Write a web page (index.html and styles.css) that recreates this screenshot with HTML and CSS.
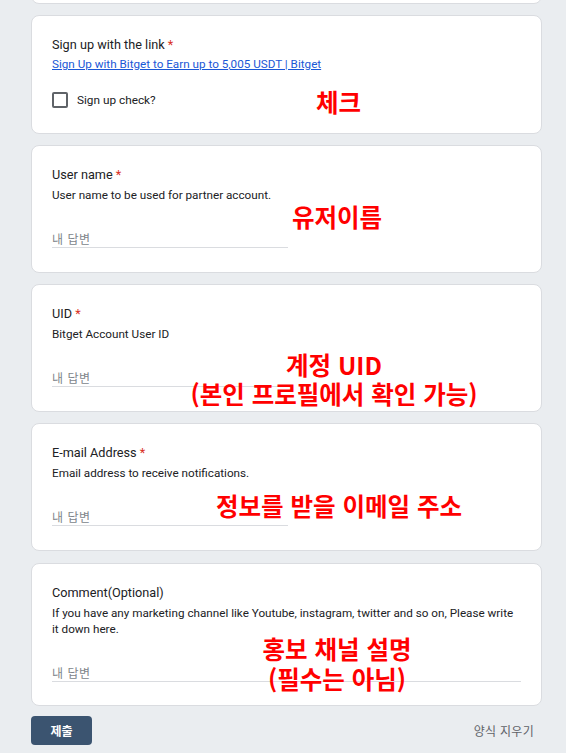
FILE: index.html
```html
<!DOCTYPE html>
<html lang="ko">
<head>
<meta charset="utf-8">
<title>Form</title>
<link rel="stylesheet" href="styles.css">
</head>
<body>
<div class="form">
  <div class="card card-prev"></div>

  <div class="card card-first">
    <div class="title">Sign up with the link <span class="req">*</span></div>
    <a class="link" href="#">Sign Up with Bitget to Earn up to 5,005 USDT | Bitget</a>
    <label class="check-row"><span class="box"></span><span class="check-label">Sign up check?</span></label>
    <div class="note note-check">체크</div>
  </div>

  <div class="card">
    <div class="title">User name <span class="req">*</span></div>
    <div class="desc">User name to be used for partner account.</div>
    <div class="answer">내 답변</div>
    <div class="note note-user">유저이름</div>
  </div>

  <div class="card">
    <div class="title">UID <span class="req">*</span></div>
    <div class="desc">Bitget Account User ID</div>
    <div class="answer">내 답변</div>
    <div class="note note-uid">계정 UID<br>(본인 프로필에서 확인 가능)</div>
  </div>

  <div class="card">
    <div class="title">E-mail Address <span class="req">*</span></div>
    <div class="desc">Email address to receive notifications.</div>
    <div class="answer">내 답변</div>
    <div class="note note-mail">정보를 받을 이메일 주소</div>
  </div>

  <div class="card card-last">
    <div class="title">Comment(Optional)</div>
    <div class="desc">If you have any marketing channel like Youtube, instagram, twitter and so on, Please write it down here.</div>
    <div class="answer answer-wide">내 답변</div>
    <div class="note note-comment">홍보 채널 설명<br>(필수는 아님)</div>
  </div>

  <div class="actions">
    <button class="submit" type="button">제출</button>
    <span class="clear">양식 지우기</span>
  </div>
</div>
</body>
</html>
```

FILE: styles.css
```css
html, body {
  margin: 0;
  padding: 0;
  background: #eaedf0;
}

body {
  font-family: Roboto, "Noto Sans CJK KR", "Liberation Sans", sans-serif;
  color: #202124;
  height: 753px;
  overflow: hidden;
}

.form {
  width: 511px;
  margin-left: 31px;
  display: flex;
  flex-direction: column;
  gap: 11px;
}

.card {
  position: relative;
  box-sizing: border-box;
  background: #fff;
  border: 1px solid #dadce0;
  border-radius: 8px;
  padding: 19px 20px 24px;
}

.card-prev {
  height: 24px;
  margin-top: -20px;
  padding: 0;
}

.card-last {
  margin-top: 1px;
  padding-bottom: 23px;
}

.title {
  font-size: 12.7px;
  line-height: 20px;
}

.req {
  color: #d93025;
}

.link {
  display: block;
  padding-top: 1px;
  font-size: 11.7px;
  line-height: 17px;
  color: #1a57d6;
  text-decoration: underline;
}

.check-row {
  display: flex;
  align-items: center;
  margin-top: 18px;
  height: 18px;
}

.box {
  box-sizing: border-box;
  width: 16px;
  height: 16px;
  border: 2px solid #5f6368;
  border-radius: 2px;
}

.check-label {
  margin-left: 9px;
  font-size: 11.8px;
  color: #202124;
}

.desc {
  font-size: 11.7px;
  line-height: 16px;
  padding-top: 2px;
}

.answer {
  width: 236px;
  height: 17px;
  margin-top: 27px;
  font-family: "Noto Sans CJK KR", sans-serif;
  font-size: 12px;
  line-height: 17px;
  color: #80868b;
  letter-spacing: 0.5px;
  border-bottom: 1px solid #dadce0;
}

.answer-wide {
  width: auto;
}

.note {
  position: absolute;
  font-family: "Noto Sans CJK KR", sans-serif;
  font-weight: 700;
  font-size: 24.5px;
  line-height: 28px;
  color: #ff0000;
  white-space: nowrap;
}

.note-check {
  left: 284px;
  top: 72px;
}

.note-user {
  left: 260px;
  top: 57px;
}

.note-uid {
  left: 302px;
  top: 65px;
  line-height: 29px;
  transform: translateX(-50%);
  text-align: center;
}

.note-mail {
  left: 184px;
  top: 68px;
}

.note-comment {
  left: 305px;
  top: 70px;
  line-height: 30px;
  transform: translateX(-50%);
  text-align: center;
}

.actions {
  display: flex;
  justify-content: space-between;
  align-items: center;
  margin-top: -1px;
  padding-right: 8px;
}

.submit {
  width: 61px;
  height: 29px;
  border: none;
  border-radius: 4px;
  background: #3b5470;
  color: #fff;
  font-family: "Noto Sans CJK KR", sans-serif;
  font-weight: 700;
  font-size: 12px;
  padding: 0;
}

.clear {
  font-family: "Noto Sans CJK KR", sans-serif;
  font-size: 12px;
  color: #5f6368;
  letter-spacing: 0.3px;
}
```
